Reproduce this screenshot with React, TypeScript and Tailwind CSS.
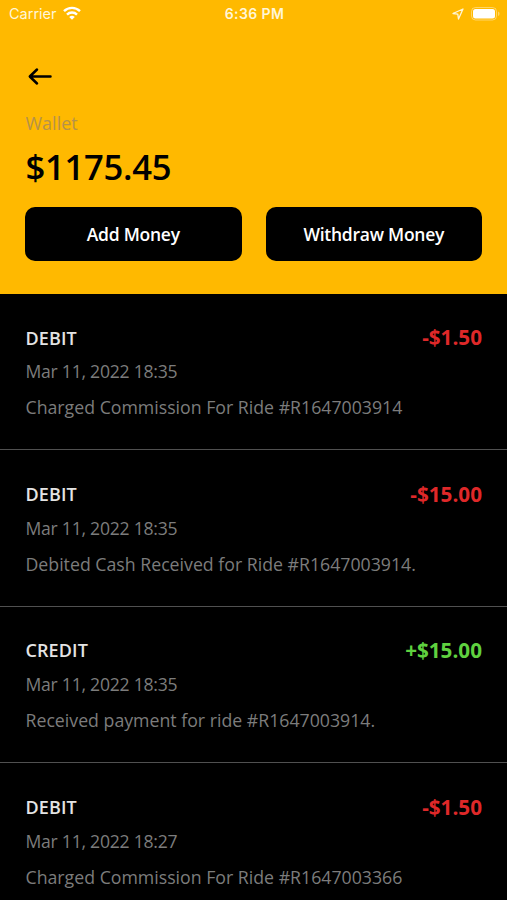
const rows = [
  { type: 'DEBIT', amount: '-$1.50', color: 'text-[#df2829]', date: 'Mar 11, 2022 18:35', note: 'Charged Commission For Ride #R1647003914' },
  { type: 'DEBIT', amount: '-$15.00', color: 'text-[#df2829]', date: 'Mar 11, 2022 18:35', note: 'Debited Cash Received for Ride #R1647003914.' },
  { type: 'CREDIT', amount: '+$15.00', color: 'text-[#5fd13f]', date: 'Mar 11, 2022 18:35', note: 'Received payment for ride #R1647003914.' },
  { type: 'DEBIT', amount: '-$1.50', color: 'text-[#df2829]', date: 'Mar 11, 2022 18:27', note: 'Charged Commission For Ride #R1647003366' },
];

function StatusBar() {
  return (
    <div className="grid h-7 grid-cols-3 items-center pl-[9px] pr-[7px] font-['Inter',sans-serif] text-[14.5px] text-[#fff6d8]">
      <div className="flex items-center gap-[6px]">
        <span>Carrier</span>
        <svg className="-mt-[3px]" width="18" height="14" viewBox="0 0 18 14" fill="none" stroke="white" strokeWidth="2.4">
          <path d="M1 5.2a11.4 11.4 0 0 1 16 0M4 8.6a7.1 7.1 0 0 1 10 0" />
          <path d="M9 13.8 6.2 11a4 4 0 0 1 5.6 0Z" fill="white" stroke="none" />
        </svg>
      </div>
      <span className="-mt-px whitespace-nowrap text-center text-[14px] font-semibold tracking-[0.4px]">6:36 PM</span>
      <div className="flex items-center justify-end gap-[7px]">
        <svg width="12" height="12" viewBox="0 0 12 12" fill="none" stroke="#fff6d8" strokeWidth="1.3" strokeLinejoin="round">
          <path d="M11 1 1 5.5l4.8.7.7 4.8Z" />
        </svg>
        <svg width="29" height="14" viewBox="0 0 29 14">
          <rect x=".5" y=".5" width="25" height="12.5" rx="4" fill="none" stroke="white" strokeOpacity=".4" />
          <rect x="2" y="2" width="22" height="9.5" rx="2.5" fill="white" />
          <path d="M27 4.5a2.4 2.4 0 0 1 0 4.5Z" fill="white" fillOpacity=".4" />
        </svg>
      </div>
    </div>
  );
}

export default function App() {
  return (
    <div className="h-[900px] w-[507px] overflow-hidden bg-black font-['Open_Sans',sans-serif]">
      <header className="h-[294px] bg-[#ffb900]">
        <StatusBar />
        <div className="px-[25px] pt-9">
          <svg className="ml-[3px]" width="24" height="24" viewBox="0 0 24 24" fill="none" stroke="black" strokeWidth="2.5" strokeLinecap="round" strokeLinejoin="round">
            <path d="M22.5 12.5H2M9 5.5l-7.2 7 7.2 7" />
          </svg>
          <div className="mt-[22px] pl-[0.5px] text-[18px] leading-[26px] text-[#b6924a]">Wallet</div>
          <div className="mt-[9px] pl-[0.5px] text-[34.6px] font-semibold leading-[44px] tracking-[-0.25px]">$1175.45</div>
          <div className="mt-[18px] grid grid-cols-2 gap-6">
            <button className="h-[54px] rounded-[10px] bg-black pt-px text-[17.5px] font-semibold tracking-[-0.25px] text-white">Add Money</button>
            <button className="h-[54px] rounded-[10px] bg-black pt-px text-[17.5px] font-semibold tracking-[-0.25px] text-white">Withdraw Money</button>
          </div>
        </div>
      </header>
      <main>
        {rows.map((r, i) => (
          <section key={i} className="h-[156.4px] border-b border-[#505050] px-[25px] pt-[30px]">
            <div className="flex h-7 items-center justify-between">
              <span className="pl-[0.5px] text-[18px] font-semibold tracking-[0.1px] text-[#e4e4e4]">{r.type}</span>
              <span className={`text-[20.7px] font-bold ${r.color}`}>{r.amount}</span>
            </div>
            <div className="mt-[7.4px] pl-[0.5px] text-[17.6px] leading-6 tracking-[-0.25px] text-[#7c7c7c]">{r.date}</div>
            <div className="mt-3 whitespace-nowrap pl-[0.5px] text-[17.73px] leading-6 text-[#7c7c7c]">{r.note}</div>
          </section>
        ))}
      </main>
    </div>
  );
}
